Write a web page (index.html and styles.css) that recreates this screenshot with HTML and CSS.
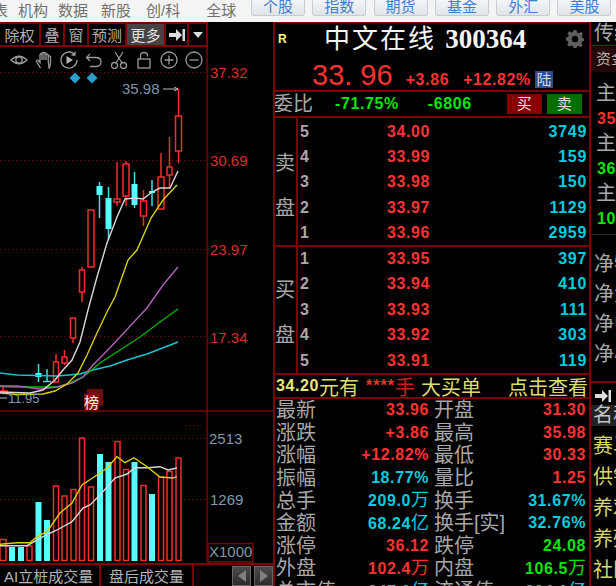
FILE: index.html
```html
<!DOCTYPE html>
<html lang="zh-CN">
<head>
<meta charset="utf-8">
<title>中文在线 300364</title>
<link rel="stylesheet" href="styles.css">
</head>
<body>
<header class="topbar">
  <nav class="topnav"><span>表</span><span>机构</span><span>数据</span><span>新股</span><span>创/科</span><span>全球</span></nav>
  <nav class="markets"><a>个股</a><a>指数</a><a>期货</a><a>基金</a><a>外汇</a><a>美股</a></nav>
</header>
<main class="main">
  <section class="chart">
    <div class="toolbar">
      <span class="tool t-chu">除权</span><span class="tool t-die">叠</span><span class="tool t-die">窗</span><span class="tool t-yu">预测</span><span class="tool t-more">更多</span>
      <span class="tool t-ico"><svg width="16" height="14" viewBox="0 0 16 14"><polygon class="fill-l" points="0,5 7,5 7,1 13,7 7,13 7,9 0,9"/><rect class="fill-l" x="13.5" y="1" width="2.5" height="12"/></svg></span>
      <span class="tool t-drop"><svg width="10" height="6" viewBox="0 0 10 6"><polygon class="fill-l" points="0,0 10,0 5,6"/></svg></span>
    </div>
    <div class="plot">
      <div class="icons">
        <svg class="ico" viewBox="0 0 18 18"><path d="M1 9Q9 1.5 17 9Q9 16.5 1 9Z"/><circle cx="9" cy="9" r="3.2"/></svg>
        <svg class="ico" viewBox="0 0 18 18"><path d="M5.5 17L1.5 10.5Q1.5 8.5 3.5 9.5L5 11.5V3.5Q6 2 7 3.5V9M7 9V2Q8 .7 9 2V9M9 9V2.5Q10 1 11 2.5V9M11 9V4Q12 2.5 13.2 4V9M13.2 9V5.5Q14.3 4.2 15.5 5.5V12Q15.5 15 14 17Z"/></svg>
        <svg class="ico" viewBox="0 0 18 18"><path d="M14.5 3.2A8 8 0 1 0 17 9M15 .5V4H11.5"/><polygon class="fill-m" points="6.5,5 13,9 6.5,13"/></svg>
        <svg class="ico" viewBox="0 0 18 18"><path d="M5 3L1.5 6.5L5 10M1.5 6.5H11Q16 6.5 16 11Q16 15.5 11 15.5H5"/></svg>
        <svg class="ico" viewBox="0 0 18 18"><circle cx="4.5" cy="14.5" r="3"/><circle cx="13.5" cy="14.5" r="3"/><path d="M6 12L13 1M12 12L5 1"/></svg>
        <svg class="ico" viewBox="0 0 18 18"><rect x="3" y="8" width="12" height="9"/><path d="M5.5 8V4.5Q5.5 1.5 9 1.5Q12.5 1.5 12.5 4.5V5.5"/></svg>
        <svg class="ico" viewBox="0 0 18 18"><circle cx="9" cy="9" r="8"/><path d="M4.5 9H13.5M9 4.5V13.5"/></svg>
        <svg class="ico" viewBox="0 0 18 18"><circle cx="9" cy="9" r="8"/><path d="M4.5 9H13.5"/></svg>
      </div>
      <svg class="graph" width="273" height="516" viewBox="0 47 273 516">
        <g class="grid">
          <path d="M0 72.5H207M0 160.5H207M0 249.5H207M0 336.5H207M0 438.5H207M0 499.5H207M185 425.5H205"/>
        </g>
        <g class="frame"><path d="M207 47V562M0 411H273"/></g>
        <polygon class="diamond" points="75,72.5 80.5,78 75,83.5 69.5,78"/>
        <polygon class="diamond" points="92,72.5 97.5,78 92,83.5 86.5,78"/>

        <text class="note" x="122" y="94">35.98</text>
        <path class="arrow" d="M163 89H178M174 87L178 89L174 91"/>

        <g class="up">
          <path d="M178.5 89V116M178.5 151V163M169.5 137V167M169.5 175V188M161 153V177M143.5 190V201M143.5 216V226M126 161V164M126 196V206M117 162V199M117 202V206M82 267V270M82 292V302M73 338V343M64.5 350V357M64.5 363V365M56 354V362M56 382V383"/>
          <rect x="175.5" y="116" width="6" height="35"/>
          <rect x="167" y="167" width="5" height="8"/>
          <rect x="158" y="177" width="6" height="32"/>
          <rect x="140.5" y="201" width="6" height="15"/>
          <rect x="123" y="164" width="6" height="32"/>
          <rect x="114" y="199" width="6" height="3"/>
          <rect x="88" y="210" width="6" height="57"/>
          <rect x="79.5" y="270" width="5" height="22"/>
          <rect x="70.5" y="318" width="5" height="20"/>
          <rect x="62" y="357" width="5" height="6"/>
          <rect x="53.5" y="362" width="5" height="20"/>
          <path d="M3 387V392M0 391H8"/>
        </g>
        <g class="down">
          <path d="M152 180V206M134.5 172V208M108.5 187V240M99.5 182V218M47 369V382M43 381.5H51M38.5 364V382"/>
          <rect class="solid" x="149" y="191" width="6" height="2"/>
          <rect class="solid" x="131.5" y="184" width="6" height="21"/>
          <rect class="solid" x="105.5" y="198" width="6" height="31"/>
          <rect class="solid" x="96.5" y="186" width="6" height="9"/>
          <rect class="solid" x="35.5" y="373" width="6" height="4"/>
        </g>

        <polyline class="ma-c" points="0,373 17,375 57,376 80,374 93,370 110,366 127,360 147,354 160,349 178,342"/>
        <polyline class="ma-g" points="0,386.5 17,387 57,387 70,383 83,377 100,363 120,350 140,337 160,322 178,309"/>
        <polyline class="ma-p" points="0,386 17,386 40,389 57,387 72,383 83,377 93,365 103,355 120,337 133,323 147,308 163,285 178,267"/>
        <polyline class="ma-y" points="0,393 17,394.5 43,394 55,391 67,384 78,373 87,355 97,333 107,312 115,297 128,260 137,250 151,218 163,200 177,185"/>
        <polyline class="ma-w" points="0,392 30,393 43,390 55,380 63,370 72,360 80,342 88,310 97,277 107,243 117,217 125,199 135,198 143,199 152,192 160,188 170,188 178,171"/>

        <path class="arrow" d="M0 398H7"/>
        <text class="note note-low" x="8" y="403">11.95</text>
        <rect class="badge-back" x="87" y="389" width="16" height="17"/>
        <rect class="badge-front" x="84" y="394" width="15" height="16"/>
        <text class="badge-text" x="84" y="408">榜</text>

        <g class="axis-red">
          <text x="210" y="78">37.32</text>
          <text x="210" y="166">30.69</text>
          <text x="210" y="255">23.97</text>
          <text x="210" y="343">17.34</text>
        </g>
        <g class="axis-blue">
          <text x="209" y="444">2513</text>
          <text x="210" y="505">1269</text>
          <text x="209" y="557">X1000</text>
        </g>
        <rect class="x-box" x="208" y="543.5" width="45" height="18.5"/>

        <g class="bar-r">
          <rect x="0" y="539.5" width="6" height="21"/>
          <rect x="27" y="546" width="5" height="14.5"/>
          <rect x="53.5" y="486" width="5" height="74.5"/>
          <rect x="62" y="496" width="5" height="64.5"/>
          <rect x="71" y="489.5" width="5" height="71"/>
          <rect x="79.5" y="438" width="5" height="122.5"/>
          <rect x="88.5" y="487" width="5" height="73.5"/>
          <rect x="115" y="441.5" width="5" height="119"/>
          <rect x="123.5" y="469.5" width="5" height="91"/>
          <rect x="141" y="485.5" width="5" height="75"/>
          <rect x="158.5" y="477" width="5" height="83.5"/>
          <rect x="167" y="471.5" width="5" height="89"/>
          <rect x="176" y="458" width="5" height="102.5"/>
        </g>
        <g class="bar-c">
          <rect x="9" y="547" width="6" height="14"/>
          <rect x="18" y="547" width="6" height="14"/>
          <rect x="35.5" y="502" width="6" height="59"/>
          <rect x="44" y="520" width="6" height="41"/>
          <rect x="97" y="454" width="6" height="107"/>
          <rect x="105.5" y="462" width="6" height="99"/>
          <rect x="131.5" y="462" width="6" height="99"/>
          <rect x="149" y="494" width="6" height="67"/>
        </g>
        <polyline class="ma-w" points="0,545.7 27,545.7 43,536.7 57,530 72,521.7 83,508 90,505 100,495 115,478 127,474 135,467.7 148,467.7 160,466.7 168,470 177,468"/>
        <polyline class="ma-y" points="0,544.3 17,542.7 30,542.7 37,536.7 47,531.7 60,513 72,503 82,485 97,475 107,468 117,456.7 125,462.7 134,457.7 147,466.7 160,477 173,478 177,476.7"/>
      </svg>
    </div>
    <div class="chart-tabs">
      <span class="ctab ctab-ai">AI立桩成交量</span>
      <span class="ctab ctab-after">盘后成交量</span>
      <span class="pager">
        <button class="page-btn"><svg width="8" height="12" viewBox="0 0 8 12"><polygon points="8,0 0,6 8,12"/></svg></button>
        <button class="page-btn"><svg width="8" height="12" viewBox="0 0 8 12"><polygon points="0,0 8,6 0,12"/></svg></button>
      </span>
    </div>
  </section>

  <section class="quote">
    <div class="q-head">
      <div class="q-title">
        <span class="rflag">R</span>
        <h1 class="q-name">中文在线 <span class="q-code">300364</span></h1>
        <svg class="gear" width="18" height="18" viewBox="0 0 18 18"><path d="M7.5 0H10.5L11 2.4L13 3.2L15 1.8L17 4L15.7 6L16.4 8L18 8.5V11L16 11.6L15.3 13.4L16.6 15.4L14.6 17.2L12.6 15.9L11 16.5L10.5 18H7.5L7 16.2L5.2 15.5L3.2 16.8L1.2 14.8L2.5 12.8L1.8 11L0 10.5V7.5L2 7L2.7 5.2L1.4 3.2L3.4 1.2L5.4 2.5L7 1.9Z M9 5.8A3.2 3.2 0 1 0 9 12.2A3.2 3.2 0 1 0 9 5.8Z" fill-rule="evenodd"/></svg>
      </div>
      <div class="q-price">
        <span class="price-big">33. 96</span>
        <span class="num red pr-a">+3.86</span>
        <span class="num red pr-b">+12.82%</span>
        <span class="lu">陆</span>
      </div>
    </div>
    <div class="q-ratio">
      <span class="ratio-label">委比</span>
      <span class="num green ratio-a">-71.75%</span>
      <span class="num green ratio-b">-6806</span>
      <span class="trade buy">买</span>
      <span class="trade sell">卖</span>
    </div>
    <div class="book book-sell">
      <div class="book-side">卖<br>盘</div>
      <div class="book-rows">
        <div class="lvl"><span class="lv">5</span><span class="num red">34.00</span><span class="num cyan">3749</span></div>
        <div class="lvl"><span class="lv">4</span><span class="num red">33.99</span><span class="num cyan">159</span></div>
        <div class="lvl"><span class="lv">3</span><span class="num red">33.98</span><span class="num cyan">150</span></div>
        <div class="lvl"><span class="lv">2</span><span class="num red">33.97</span><span class="num cyan">1129</span></div>
        <div class="lvl"><span class="lv">1</span><span class="num red">33.96</span><span class="num cyan">2959</span></div>
      </div>
    </div>
    <div class="book book-buy">
      <div class="book-side">买<br>盘</div>
      <div class="book-rows">
        <div class="lvl"><span class="lv">1</span><span class="num red">33.95</span><span class="num cyan">397</span></div>
        <div class="lvl"><span class="lv">2</span><span class="num red">33.94</span><span class="num cyan">410</span></div>
        <div class="lvl"><span class="lv">3</span><span class="num red">33.93</span><span class="num cyan">111</span></div>
        <div class="lvl"><span class="lv">4</span><span class="num red">33.92</span><span class="num cyan">303</span></div>
        <div class="lvl"><span class="lv">5</span><span class="num red">33.91</span><span class="num cyan">119</span></div>
      </div>
    </div>
    <div class="bigorder">
      <span class="num yellow">34.20</span><span class="yel">元有</span>
      <span class="stars">****</span><span class="hand">手</span>
      <span class="yel big-a">大买单</span>
      <span class="yel big-b">点击查看</span>
    </div>
    <div class="stats">
      <span class="k">最新</span><span class="num red v">33.96</span><span class="k">开盘</span><span class="num red v">31.30</span>
      <span class="k">涨跌</span><span class="num red v">+3.86</span><span class="k">最高</span><span class="num red v">35.98</span>
      <span class="k">涨幅</span><span class="num red v">+12.82%</span><span class="k">最低</span><span class="num red v">30.33</span>
      <span class="k">振幅</span><span class="num cyan v">18.77%</span><span class="k">量比</span><span class="num red v">1.25</span>
      <span class="k">总手</span><span class="num cyan v">209.0<i class="unit">万</i></span><span class="k">换手</span><span class="num cyan v">31.67%</span>
      <span class="k">金额</span><span class="num cyan v">68.24<i class="unit">亿</i></span><span class="k">换手[实]</span><span class="num cyan v">32.76%</span>
      <span class="k">涨停</span><span class="num red v">36.12</span><span class="k">跌停</span><span class="num green v">24.08</span>
      <span class="k">外盘</span><span class="num red v">102.4<i class="unit">万</i></span><span class="k">内盘</span><span class="num green v">106.5<i class="unit">万</i></span>
      <span class="k">总市值</span><span class="num cyan v">247.0<i class="unit">亿</i></span><span class="k">流通值</span><span class="num cyan v">204.1<i class="unit">亿</i></span>
    </div>
  </section>

  <aside class="side">
    <div class="side-tab">传统</div>
    <div class="side-fund">资金流向</div>
    <div class="side-flow">
      <div class="s-row">主力流入</div>
      <div class="s-row num red">35.6亿</div>
      <div class="s-row">主力流出</div>
      <div class="s-row num green">36.2亿</div>
      <div class="s-row">主力净额</div>
      <div class="s-row num green">10.4亿</div>
    </div>
    <div class="side-net">
      <div class="n-row">净特大单</div>
      <div class="n-row">净大单</div>
      <div class="n-row">净中单</div>
      <div class="n-row">净小单</div>
    </div>
    <div class="side-arrow"><svg width="16" height="14" viewBox="0 0 16 14"><polygon class="fill-l" points="0,5 7,5 7,1 13,7 7,13 7,9 0,9"/><rect class="fill-l" x="13.5" y="1" width="2.5" height="12"/></svg></div>
    <div class="side-names">
      <div class="name-head">名称</div>
      <div class="name-row">赛马概念</div>
      <div class="name-row">供销社</div>
      <div class="name-row">养鸡</div>
      <div class="name-row">养殖</div>
      <div class="name-row">社区团购</div>
    </div>
  </aside>
</main>
</body>
</html>
```

FILE: styles.css
```css
* { box-sizing: border-box; }
html, body { margin: 0; padding: 0; }
body {
  width: 616px;
  height: 586px;
  overflow: hidden;
  background: #000;
  color: #a8a8a8;
  font-family: "Liberation Sans", "Noto Sans CJK SC", sans-serif;
}

/* top bar */
.topbar {
  display: flex;
  height: 22px;
  background: #f4f4f4;
  overflow: hidden;
}
.topnav {
  display: flex;
  width: 251px;
  color: #707070;
  font-size: 15px;
  line-height: 21px;
  white-space: nowrap;
}
.topnav span:nth-child(1) { margin-left: -7px; }
.topnav span:nth-child(2) { margin-left: 10px; }
.topnav span:nth-child(3) { margin-left: 10px; }
.topnav span:nth-child(4) { margin-left: 13px; }
.topnav span:nth-child(5) { margin-left: 15px; }
.topnav span:nth-child(6) { margin-left: 26px; }
.markets { display: flex; gap: 7.3px; }
.markets a {
  width: 54px;
  height: 16px;
  line-height: 14px;
  text-align: center;
  font-size: 15px;
  color: #3d80d2;
  background: linear-gradient(#f2f5f9, #e0e4e9);
  border: 1px solid #c9cbce;
  border-top: 0;
  border-radius: 0 0 3px 3px;
  overflow: hidden;
}

/* layout */
.main { display: flex; height: 564px; }
.chart { width: 273px; flex: none; display: flex; flex-direction: column; }
.quote {
  width: 318px;
  flex: none;
  border-left: 2px solid #7f0000;
  border-right: 2px solid #7f0000;
  border-top: 1px solid #7f0000;
  display: flex;
  flex-direction: column;
  overflow: hidden;
}
.quote > * { flex: none; }
.side { width: 25px; flex: none; overflow: hidden; white-space: nowrap; }

/* chart toolbar */
.toolbar {
  display: flex;
  height: 25px;
  border-top: 2px solid #7f0000;
  border-bottom: 2px solid #7f0000;
  width: 208px;
}
.tool {
  display: flex;
  align-items: center;
  justify-content: center;
  border-right: 2px solid #7f0000;
  font-size: 15px;
  color: #b4b4b4;
  white-space: nowrap;
}
.t-chu { width: 41px; }
.t-die { width: 24px; }
.t-yu { width: 38px; }
.t-more { width: 39px; background: #444; color: #e0e0e0; }
.t-ico { width: 23px; }
.t-drop { width: 19px; }
.fill-l { fill: #dcdcdc; }
.fill-m { fill: #b4b4b4; stroke: none; }

/* plot */
.plot { position: relative; height: 516px; }
.graph { display: block; }
.icons {
  position: absolute;
  left: 10px;
  top: 4px;
  display: flex;
  gap: 7px;
}
.ico {
  width: 18px;
  height: 18px;
  fill: none;
  stroke: #9a9a9a;
  stroke-width: 1.3;
}
.grid path { stroke: #7a0000; stroke-dasharray: 1 3; fill: none; }
.frame path { stroke: #7f0000; stroke-width: 1.5; fill: none; }
.diamond { fill: #2b9ccb; }
.note { fill: #7e97ab; font-size: 15px; }
.note-low { font-size: 13px; }
.arrow { stroke: #bdbdbd; fill: none; }
.up path, .up rect { stroke: #f42c2c; stroke-width: 1.5; fill: #000; }
.down path { stroke: #3fdfe0; stroke-width: 1.5; fill: none; }
.down .solid { fill: #55ffff; }
.ma-w, .ma-y, .ma-p, .ma-g, .ma-c { fill: none; stroke-width: 1.4; }
.ma-w { stroke: #d8d8d8; }
.ma-y { stroke: #d8d000; }
.ma-p { stroke: #b060b8; }
.ma-g { stroke: #00b000; }
.ma-c { stroke: #1cc0d0; }
.badge-back { fill: #6e0d0d; }
.badge-front { fill: #8a1010; }
.badge-text { fill: #f2f2f2; font-size: 15px; }
.axis-red text { fill: #d92e2e; font-size: 15px; }
.axis-blue text { fill: #8298ac; font-size: 15px; }
.x-box { fill: none; stroke: #7f0000; stroke-width: 1.5; }
.bar-r rect { fill: #000; stroke: #f42c2c; stroke-width: 1.5; }
.bar-c rect { fill: #55ffff; }

/* chart tabs */
.chart-tabs {
  display: flex;
  align-items: stretch;
  height: 23px;
  border-top: 2px solid #7f0000;
  font-size: 15px;
  color: #b4b4b4;
}
.ctab { display: flex; align-items: center; border-right: 2px solid #7f0000; white-space: nowrap; }
.ctab-ai { width: 101px; padding-left: 4px; }
.ctab-after { width: 93px; padding-left: 8px; }
.pager { display: flex; gap: 3px; margin-left: auto; padding-top: 1px; }
.page-btn {
  width: 19px;
  padding: 0;
  background: linear-gradient(#4a4a4a, #2c2c2c);
  border: 1px solid #666;
  display: flex;
  align-items: center;
  justify-content: center;
}
.page-btn polygon { fill: #808080; }

/* quote head */
.q-head { height: 69px; border-bottom: 2px solid #7f0000; }
.q-title {
  display: flex;
  align-items: center;
  height: 31px;
  margin-bottom: 8px;
  padding: 0 5px 0 3px;
}
.rflag { color: #ffff80; font-size: 12px; font-weight: 700; width: 10px; }
.q-name {
  margin: 0 0 0 36px;
  font-size: 26px;
  font-weight: 400;
  line-height: 30px;
  color: #f4f4f4;
  letter-spacing: 2px;
  white-space: nowrap;
}
.q-code {
  font-family: "Liberation Serif", serif;
  font-weight: 700;
  font-size: 27px;
  letter-spacing: 0;
}
.gear { margin-left: auto; fill: #5f5f5f; }
.q-price {
  display: flex;
  align-items: baseline;
  padding-left: 37px;
  white-space: nowrap;
}
.price-big { font-size: 29px; line-height: 26px; color: #ff3232; }
.num { font-weight: 700; font-size: 16px; letter-spacing: .6px; font-style: normal; }
.red { color: #ff3232; }
.green { color: #00e600; }
.cyan { color: #00cce0; }
.yellow { color: #e8e87a; }
.pr-a { margin-left: 13px; }
.pr-b { margin-left: 14px; }
.lu {
  margin-left: 4px;
  width: 18px;
  height: 17px;
  line-height: 17px;
  text-align: center;
  font-size: 15px;
  color: #cfd6e4;
  background: #2c4c92;
}

/* ratio */
.q-ratio {
  display: flex;
  align-items: center;
  height: 26px;
  border-bottom: 2px solid #7f0000;
  white-space: nowrap;
}
.ratio-label { font-size: 20px; line-height: 24px; margin-left: -2px; }
.ratio-a { margin-left: 22px; }
.ratio-b { margin-left: 29px; }
.trade {
  width: 35px;
  height: 20px;
  line-height: 20px;
  text-align: center;
  font-size: 15px;
  color: #e0e0e0;
}
.buy { margin-left: 35px; background: #860000; }
.sell { margin-left: 5px; background: #006e00; }

/* order book */
.book { display: flex; border-bottom: 2px solid #7f0000; }
.book-sell { height: 129px; }
.book-buy { height: 128px; }
.book-side {
  width: 23px;
  flex: none;
  border-right: 2px solid #7f0000;
  font-size: 20px;
  line-height: 45px;
  text-align: center;
  padding-right: 2px;
}
.book-sell .book-side { padding-top: 23px; }
.book-buy .book-side { padding-top: 21px; }
.book-rows { flex: 1; display: grid; grid-auto-rows: 25.2px; padding-right: 2px; }
.book-sell .book-rows { padding-top: 1.5px; }
.book-buy .book-rows { margin-top: -1px; grid-auto-rows: 25.5px; }
.lvl {
  display: grid;
  grid-template-columns: 89px 44px 1fr;
  align-items: center;
  text-align: right;
}
.lv { text-align: left; padding-left: 2px; font-size: 16px; font-weight: 700; color: #a8a8a8; }
.lvl .red { text-align: left; }
.lvl .cyan { letter-spacing: .7px; }

/* big order */
.bigorder {
  display: flex;
  align-items: center;
  height: 24px;
  padding-left: 1px;
  border-bottom: 2px solid #7f0000;
  font-size: 20px;
  white-space: nowrap;
}
.yel { color: #dcdc70; }
.stars { color: #f03030; margin-left: 7px; font-size: 16px; letter-spacing: 1px; font-weight: 700; }
.hand { color: #c82020; }
.big-a { margin-left: 6px; }
.big-b { margin-left: 27px; }

/* stats */
.stats {
  display: grid;
  grid-template-columns: 60px 93px 70px 87px;
  grid-auto-rows: 22.6px;
  padding-left: 1px;
  align-items: center;
  white-space: nowrap;
}
.k { font-size: 20px; line-height: 22px; color: #a8a8a8; }
.v { text-align: right; line-height: 22px; }
.stats .k:nth-child(4n+3) { margin-left: 5px; grid-column: 3; }
.unit { font-size: 18px; font-weight: 400; font-style: normal; letter-spacing: 0; }

/* side column */
.side-tab {
  height: 24px;
  border-bottom: 1px solid #7f0000;
  font-size: 20px;
  line-height: 23px;
  padding-left: 3px;
}
.side-fund {
  height: 26px;
  background: #240606;
  font-size: 15px;
  line-height: 25px;
  padding-left: 5px;
  color: #b4b4b4;
}
.side-flow { padding: 9px 0 3px 5px; border-bottom: 1px solid #2c2c2c; }
.s-row { height: 25px; line-height: 25px; font-size: 20px; }
.s-row.num { font-size: 16px; padding-left: 1px; }
.side-net { padding: 14px 0 12px 3px; border-bottom: 2px solid #7f0000; }
.n-row { height: 30px; line-height: 30px; font-size: 20px; }
.side-arrow { height: 22px; padding: 6px 0 0 4px; }
.name-head { height: 21px; line-height: 21px; background: #222; font-size: 20px; color: #c4c4c4; padding-left: 2px; }
.name-row { height: 31px; line-height: 31px; font-size: 20px; color: #d6d670; padding-left: 2px; }
.name-head + .name-row { margin-top: 5px; }
```
